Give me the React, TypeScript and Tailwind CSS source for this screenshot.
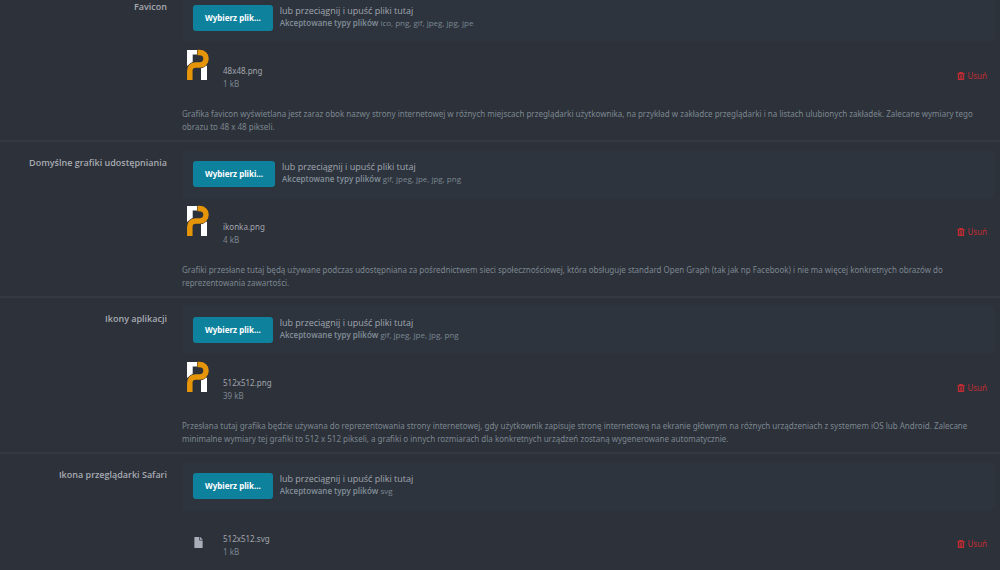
import { FaFile } from 'react-icons/fa';

interface UploadField {
  id: string;
  label: string;
  button: string;
  types: string;
  fileName: string;
  fileSize: string;
  preview: 'logo' | 'file';
  description?: string;
}

const fields: UploadField[] = [
  {
    id: 'favicon',
    label: 'Favicon',
    button: 'Wybierz plik...',
    types: 'ico, png, gif, jpeg, jpg, jpe',
    fileName: '48x48.png',
    fileSize: '1 kB',
    preview: 'logo',
    description:
      'Grafika favicon wyświetlana jest zaraz obok nazwy strony internetowej w różnych miejscach przeglądarki użytkownika, na przykład w zakładce przeglądarki i na listach ulubionych zakładek. Zalecane wymiary tego obrazu to 48 x 48 pikseli.',
  },
  {
    id: 'share',
    label: 'Domyślne grafiki udostępniania',
    button: 'Wybierz pliki...',
    types: 'gif, jpeg, jpe, jpg, png',
    fileName: 'ikonka.png',
    fileSize: '4 kB',
    preview: 'logo',
    description:
      'Grafiki przesłane tutaj będą używane podczas udostępniana za pośrednictwem sieci społecznościowej, która obsługuje standard Open Graph (tak jak np Facebook) i nie ma więcej konkretnych obrazów do reprezentowania zawartości.',
  },
  {
    id: 'app-icons',
    label: 'Ikony aplikacji',
    button: 'Wybierz plik...',
    types: 'gif, jpeg, jpe, jpg, png',
    fileName: '512x512.png',
    fileSize: '39 kB',
    preview: 'logo',
    description:
      'Przesłana tutaj grafika będzie używana do reprezentowania strony internetowej, gdy użytkownik zapisuje stronę internetową na ekranie głównym na różnych urządzeniach z systemem iOS lub Android. Zalecane minimalne wymiary tej grafiki to 512 x 512 pikseli, a grafiki o innych rozmiarach dla konkretnych urządzeń zostaną wygenerowane automatycznie.',
  },
  {
    id: 'safari',
    label: 'Ikona przeglądarki Safari',
    button: 'Wybierz plik...',
    types: 'svg',
    fileName: '512x512.svg',
    fileSize: '1 kB',
    preview: 'file',
  },
];

function Logo() {
  return (
    <svg viewBox="0 0 24 32" className="h-8 w-6" fill="none" aria-hidden="true">
      <path d="M1 1H11V5.5H6.7V13L1 17Z" fill="#fff" />
      <path d="M15 18L21 16.5V31H15Z" fill="#fff" />
      <path
        d="M13 3.5C17.700 3.5 20 6 20 9.500C20 13.500 17.500 16 13.500 16H10C6 16 3.800 18 3.800 22V31"
        stroke="#2d3139"
        strokeWidth="6.5"
      />
      <path
        d="M11.500 3.500H13C17.700 3.500 20 6 20 9.500C20 13.500 17.500 16 13.500 16H10C6 16 3.800 18 3.800 22V31"
        stroke="#e69508"
        strokeWidth="5.5"
      />
    </svg>
  );
}

function TrashIcon() {
  return (
    <svg viewBox="0 0 8 8" className="size-2" fill="none" stroke="currentColor" aria-hidden="true">
      <path d="M0.500 1.500H7.500" strokeWidth="1.3" />
      <path d="M2.500 1.500V0.500H5.500V1.500" />
      <path d="M1.500 2V7.300H6.500V2" strokeWidth="1.3" />
      <path d="M3.300 2.500V7M4.700 2.500V7" strokeWidth="0.9" />
    </svg>
  );
}

function UploadRow({ field }: { field: UploadField }) {
  return (
    <section className="flex min-h-39 border-b-2 border-[#353943]">
      <h2
        id={field.id}
        className="w-[167px] shrink-0 pt-[13px] text-right font-['Open_Sans',sans-serif] text-[9px] leading-4 font-semibold text-[#a8abb3]"
      >
        {field.label}
      </h2>
      <div className="ml-[15px] min-w-0 flex-1 pt-2 pr-[5px]">
        <div className="flex h-12 items-start rounded-sm bg-[#2d343e] px-[11px] pt-[11px]">
          <button
            type="button"
            aria-describedby={field.id}
            className="h-[26px] shrink-0 rounded-[3px] bg-[#0e829d] px-3 text-[8px] font-bold text-white"
          >
            {field.button}
          </button>
          <div className="ml-[7px] font-['Open_Sans',sans-serif]">
            <p className="text-[9px] leading-3 text-[#a2a6af]">lub przeciągnij i upuść pliki tutaj</p>
            <p className="text-[8px] leading-[11px] text-[#7c8791]">
              <strong className="font-semibold text-[#84909a]">Akceptowane typy plików</strong> {field.types}
            </p>
          </div>
        </div>

        <div className="flex pt-[7px] pr-2">
          <div className="flex h-8 w-[41px] shrink-0 pl-1">
            {field.preview === 'logo' ? (
              <Logo />
            ) : (
              <FaFile className="mt-5 ml-[7px] size-[11px] text-[#aaaebb]" />
            )}
          </div>
          <div className="flex-1 pt-[15px] text-[8px] leading-[13px]">
            <p className="text-[#a2a6af]">{field.fileName}</p>
            <p className="text-[#7c8791]">{field.fileSize}</p>
          </div>
          <button type="button" className="mt-[21px] flex h-3 items-center gap-0.5 text-[8px] text-[#c22c33]">
            <TrashIcon />
            Usuń
          </button>
        </div>

        {field.description && (
          <p className="pt-[17px] text-[8px] leading-[13px] text-[#7c8791]">{field.description}</p>
        )}
      </div>
    </section>
  );
}

export default function App() {
  return (
    <main className="h-screen overflow-hidden bg-[#2d3139] font-['Noto_Sans',sans-serif]">
      <div className="-mt-[14px]">
        {fields.map((field) => (
          <UploadRow key={field.id} field={field} />
        ))}
      </div>
    </main>
  );
}
